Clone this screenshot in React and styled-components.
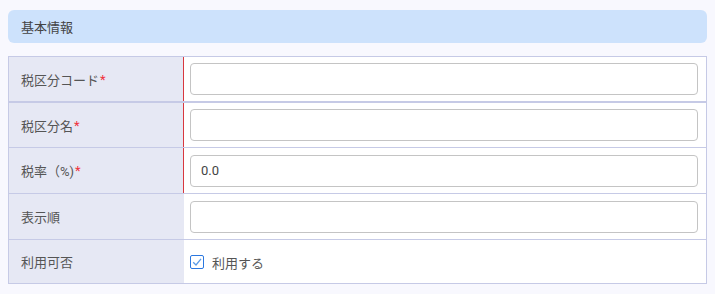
import React from "react"
import styled, { createGlobalStyle } from "styled-components"

const GlobalStyle = createGlobalStyle`
  html, body {
    margin: 0;
    padding: 0;
    background: #f8f8fe;
    font-family: Roboto, "Noto Sans CJK JP", sans-serif;
  }
`

const Page = styled.div`
  padding: 10px 8px 12px 8px;
  width: 699px;
`

const SectionHeader = styled.div`
  height: 33px;
  background-color: #cde2fc;
  border-radius: 6px;
  display: flex;
  align-items: center;
  padding-left: 13px;
  font-size: 13px;
  color: #444;
  margin-bottom: 13px;
`

const Table = styled.div`
  border: 1px solid #c6cae6;
  background-color: #fff;
`

const Row = styled.div`
  display: flex;
  height: ${({ h }) => h}px;
  border-bottom: ${({ thick }) => (thick ? 2 : 1)}px solid #c6cae6;
  box-sizing: border-box;

  &:last-child {
    border-bottom: none;
  }
`

const Label = styled.div`
  box-sizing: border-box;
  width: 175px;
  flex-shrink: 0;
  background-color: #e6e8f4;
  border-right: 1px solid ${({ required }) => (required ? "#d8383f" : "#e6e8f4")};
  display: flex;
  align-items: center;
  padding-left: 12px;
  font-size: 13px;
  color: #555;
`

const Required = styled.span`
  color: #f0323c;
  margin-left: 1px;
`

const Cell = styled.div`
  flex: 1;
  display: flex;
  align-items: center;
  padding: 0 8px 0 6px;
`

const Input = styled.input`
  box-sizing: border-box;
  width: 100%;
  height: 32px;
  border: 1px solid #c4c4c4;
  border-radius: 4px;
  padding: 0 10px;
  font-family: inherit;
  font-size: 13px;
  color: #444;
  background: #fff;
  outline: none;
`

const CheckLabel = styled.label`
  display: flex;
  align-items: center;
  gap: 8px;
  font-size: 13px;
  color: #555;
  margin-top: 1px;
`

const Box = styled.span`
  box-sizing: border-box;
  width: 14px;
  height: 14px;
  border: 1px solid #2b78e0;
  border-radius: 2px;
  display: flex;
  align-items: center;
  justify-content: center;
  background: #fff;
`

const FormRow = ({ label, required, h, thick, children }) => (
  <Row h={h} thick={thick}>
    <Label required={required}>
      {label}
      {required && <Required>*</Required>}
    </Label>
    <Cell>{children}</Cell>
  </Row>
)

const App = () => {
  return (
    <>
      <GlobalStyle />
      <Page>
        <SectionHeader>基本情報</SectionHeader>
        <Table>
          <FormRow label="税区分コード" required h={46} thick>
            <Input type="text" />
          </FormRow>
          <FormRow label="税区分名" required h={45}>
            <Input type="text" />
          </FormRow>
          <FormRow label="税率（%)" required h={46}>
            <Input type="text" defaultValue="0.0" />
          </FormRow>
          <FormRow label="表示順" h={46}>
            <Input type="text" />
          </FormRow>
          <FormRow label="利用可否" h={43}>
            <CheckLabel>
              <Box>
                <svg width="10" height="10" viewBox="0 0 10 10">
                  <path d="M1.2 5.2 L4 8 L9 1.8" fill="none" stroke="#5a9be8" strokeWidth="1.3" />
                </svg>
              </Box>
              利用する
            </CheckLabel>
          </FormRow>
        </Table>
      </Page>
    </>
  )
}

export default App
